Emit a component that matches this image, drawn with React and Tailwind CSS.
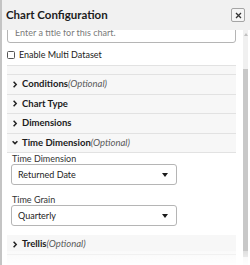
function Chevron({ open }) {
  return (
    <svg width="6" height="7" viewBox="0 0 6 7" className="shrink-0">
      {open ? (
        <polyline points="0.6,2.2 3,4.6 5.4,2.2" fill="none" stroke="#222" strokeWidth="1.5" />
      ) : (
        <polyline points="1.6,0.8 4.2,3.5 1.6,6.2" fill="none" stroke="#222" strokeWidth="1.5" />
      )}
    </svg>
  );
}

function Section({ title, optional, open }) {
  return (
    <div className="flex h-[19.5px] items-center gap-[4px] border-b border-[#e2e2e2] bg-[#f7f7f7] pl-[5px]">
      <Chevron open={open} />
      <span className="text-[9.5px] font-bold text-[#1c1c1c]">
        {title}
        {optional && <span className="font-normal italic text-[#5a5a5a]">(Optional)</span>}
      </span>
    </div>
  );
}

function Select({ label, value }) {
  return (
    <div>
      <span className="block pl-[1px] text-[9px] leading-[11px] text-[#333]">{label}</span>
      <div className="flex h-[21px] w-[166px] items-center justify-between rounded-[3px] border border-[#b5b5b5] bg-white pr-[8px] pl-[6px]">
        <span className="text-[9px] text-[#222]">{value}</span>
        <span className="h-0 w-0 border-x-[3px] border-t-[4px] border-x-transparent border-t-[#1a1a1a]" />
      </div>
    </div>
  );
}

export default function App() {
  return (
    <div
      className="relative flex h-[265px] w-[250px] flex-col overflow-hidden border-l-2 border-[#c4c4c4] bg-white"
      style={{ fontFamily: 'Lato, "Open Sans", sans-serif' }}
    >
      <div className="relative z-10 flex h-[30px] shrink-0 items-center justify-between bg-[#f1f1f1] pl-[4px] pr-[5px]">
        <h1 className="text-[11.5px] font-bold text-[#1c1c1c]">Chart Configuration</h1>
        <button className="flex h-[14px] w-[14px] items-center justify-center rounded-[2px] border border-[#a5a5a5] bg-[#f5f5f5]">
          <svg width="7" height="7" viewBox="0 0 7 7">
            <path d="M1 1L6 6M6 1L1 6" stroke="#333" strokeWidth="1.3" />
          </svg>
        </button>
      </div>
      <div className="flex min-h-0 flex-1 overflow-hidden">
        <div className="flex-1 pl-[5px]">
          <div className="-mt-[8px] h-[21px] rounded-[3px] border border-[#b5b5b5] px-[7px] pt-[4px]">
            <span className="block text-[9px] leading-[12px] text-[#7a7a7a]">Enter a title for this chart.</span>
          </div>
          <label className="mt-[5px] flex h-[14px] items-center gap-[4px]">
            <span className="h-[8px] w-[8px] rounded-[1.5px] border border-[#555] bg-white" />
            <span className="text-[9px] text-[#222]">Enable Multi Dataset</span>
          </label>
          <div className="mt-[3px]">
            <div className="h-[10px] border-y border-[#e2e2e2] bg-[#f7f7f7]" />
            <Section title="Conditions" optional />
            <Section title="Chart Type" />
            <Section title="Dimensions" />
            <Section title="Time Dimension" optional open />
            <div className="flex flex-col gap-[9px] pl-[4px] pb-[9px]">
              <Select label="Time Dimension" value="Returned Date" />
              <Select label="Time Grain" value="Quarterly" />
            </div>
            <Section title="Trellis" optional />
            <div className="h-[19px] bg-[#f7f7f7]" />
          </div>
        </div>
        <div className="ml-[7px] mr-[2px] flex w-[5px] flex-col items-center bg-[#f0f0f0] pt-[3px]">
          <span className="h-0 w-0 border-x-[2px] border-b-[3px] border-x-transparent border-b-[#c0c0c0]" />
          <div className="mt-[33px] h-[188px] w-[5px] bg-[#c8c8c8]" />
        </div>
      </div>
      <div className="pointer-events-none absolute inset-x-0 bottom-0 h-[14px] bg-gradient-to-b from-white/40 to-white/90" />
    </div>
  );
}
